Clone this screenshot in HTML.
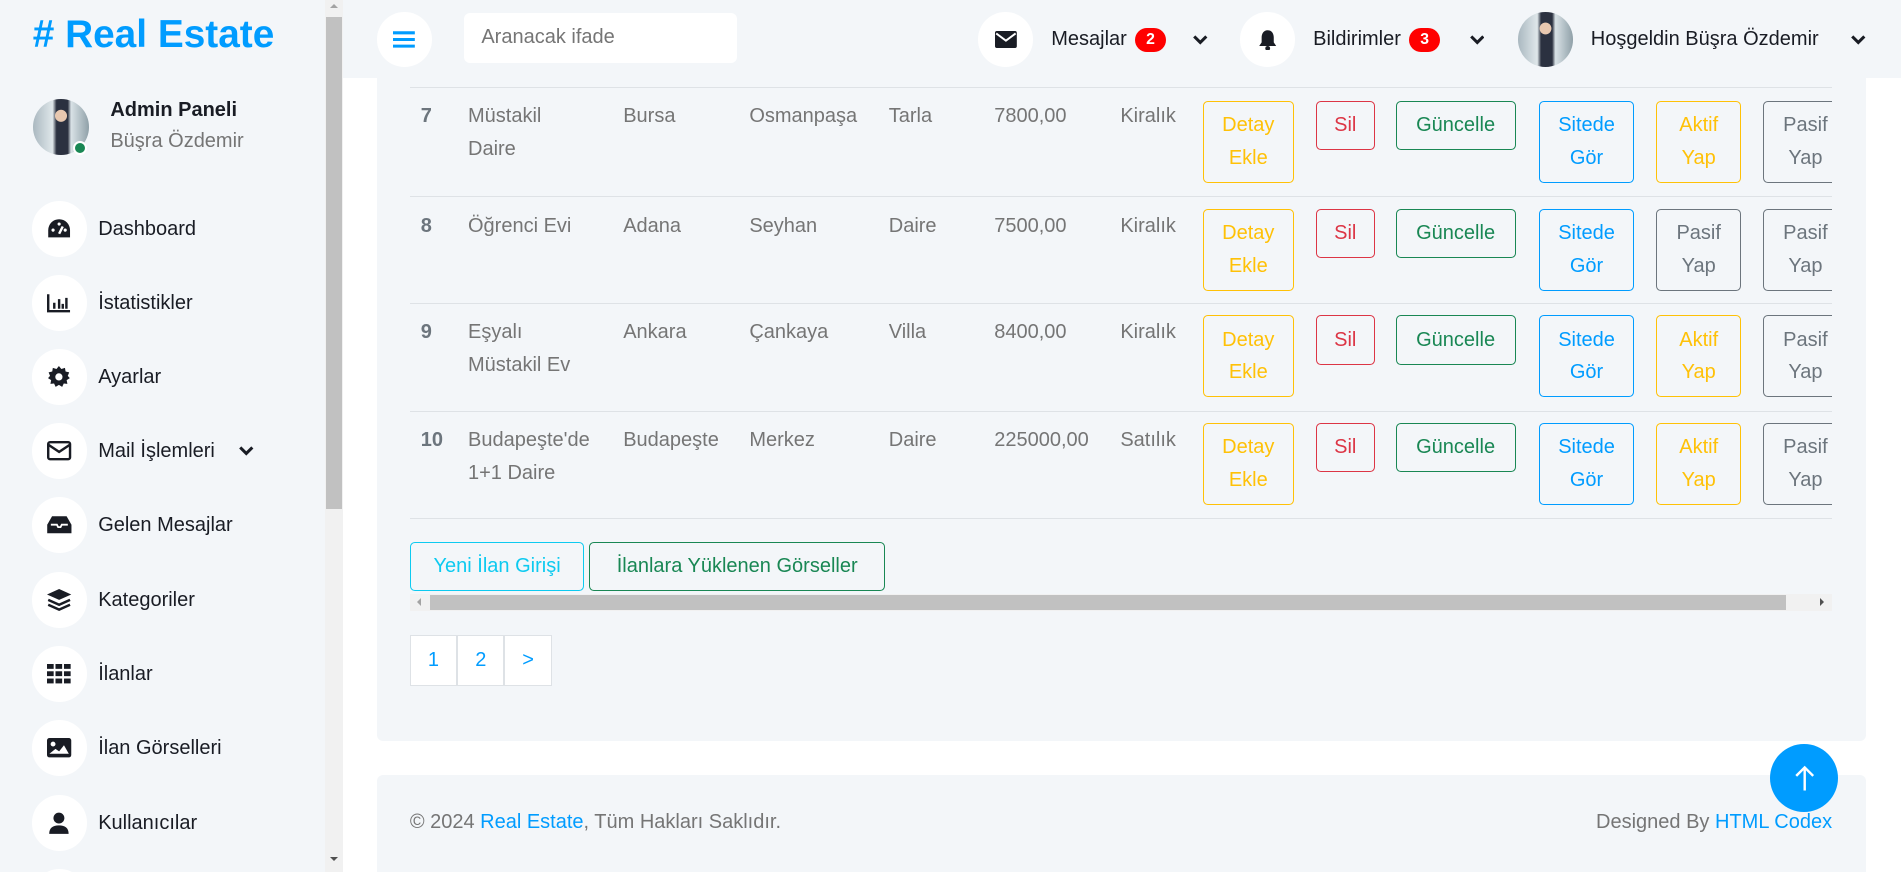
<!DOCTYPE html>
<html><head><meta charset="utf-8">
<style>
html{zoom:1.2125;background:#fff;overflow:hidden;height:719px}
*{box-sizing:border-box;margin:0;padding:0}
body{width:1568px;height:719px;overflow:hidden;background:#fff;font-family:"Liberation Sans",sans-serif;font-size:16px;color:#757575;position:relative}
.a{position:absolute}
.side{left:0;top:0;width:268px;height:719px;background:#f3f6f9}
.sb{left:268px;top:0;width:15px;height:719px;background:#f1f1f1}
.thumb{left:269px;top:14px;width:13px;height:406px;background:#c1c1c1}
.ic{width:46px;height:46px;border-radius:50%;background:#fff;display:flex;align-items:center;justify-content:center}
.nav{left:26px;display:flex;align-items:center;color:#191c24;font-size:16.5px}
.nav .ic{margin-right:9px}
.top{left:283px;top:0;width:1285px;height:64px;background:#f3f6f9}
.card{background:#f3f6f9;border-radius:5px}
.btn{position:absolute;border:1px solid;border-radius:4px;text-align:center;line-height:27px;padding:6px 0;font-size:16.5px;background:transparent}
.w{color:#ffc107;border-color:#ffc107}.d{color:#dc3545;border-color:#dc3545}.s{color:#198754;border-color:#198754}.p{color:#009cff;border-color:#009cff}.g{color:#6c757d;border-color:#6c757d}
.row{position:absolute;left:338px;width:1173px;border-top:1px solid #dee2e6}
.c{position:absolute;top:10px;line-height:27px;font-size:16.5px}
.badge{display:inline-block;width:26px;height:20px;border-radius:10px;background:#f00;color:#fff;font-size:13px;font-weight:bold;text-align:center;line-height:20px}
.pg{position:absolute;top:524px;width:39px;height:42px;border:1px solid #dee2e6;background:#fff;color:#009cff;text-align:center;line-height:40px;font-size:16.5px}
.av{border-radius:50%;background:radial-gradient(circle at 50% 30%,#e8c8b0 0 12%,transparent 13%),linear-gradient(90deg,#aab8c0,#dfe7ea 35%,#2b3140 42%,#2b3140 62%,#d9e2e6 68%,#8fa0a8)}
</style></head><body>
<div class="a side"></div>
<div class="a sb"></div><div class="a thumb"></div>
<div class="a" style="left:272px;top:3px;width:0;height:0;border:4px solid transparent;border-bottom-color:#a3a3a3;border-top:0"></div>
<div class="a" style="left:272px;top:707px;width:0;height:0;border:4px solid transparent;border-top-color:#505050;border-bottom:0"></div>
<div class="a" style="left:27px;top:11px;font-size:32px;font-weight:bold;color:#009cff">#&nbsp;Real Estate</div>
<div class="a av" style="left:27px;top:82px;width:46px;height:46px"></div>
<div class="a" style="left:60px;top:116px;width:12px;height:12px;border-radius:50%;background:#198754;border:2px solid #fff"></div>
<div class="a" style="left:91px;top:82px;font-weight:bold;color:#191c24;font-size:16.5px">Admin Paneli</div>
<div class="a" style="left:91px;top:107px;font-size:16.5px">Büşra Özdemir</div>

<div class="a nav" style="top:166px"><div class="ic"><svg width="20" height="18" viewBox="0 0 20 18"><path d="M10 1A9 9 0 0 0 1 10v6h18v-6A9 9 0 0 0 10 1z" fill="#191c24"/><circle cx="5" cy="10" r="1.3" fill="#fff"/><circle cx="15" cy="10" r="1.3" fill="#fff"/><circle cx="10" cy="5" r="1.3" fill="#fff"/><path d="M10 13L13 7" stroke="#fff" stroke-width="2"/></svg></div>Dashboard</div>
<div class="a nav" style="top:227px"><div class="ic"><svg width="20" height="16"><path d="M1 1v14h18" stroke="#191c24" stroke-width="2" fill="none"/><path d="M6 8v5M10 5v8M13 9v4M16 4v9" stroke="#191c24" stroke-width="2"/></svg></div>İstatistikler</div>
<div class="a nav" style="top:288px"><div class="ic"><svg width="18" height="18" viewBox="0 0 18 18"><path d="M9 0l2 2.5 3-1 .5 3 3 .8-1.2 2.8L18 10l-2.6 1.7.6 3-3-.3-1.3 2.8L9 15.6 6.3 17.2 5 14.4l-3 .3.6-3L0 10l1.7-1.9L.5 5.3l3-.8.5-3 3 1z" fill="#191c24"/><circle cx="9" cy="9" r="3" fill="#fff"/></svg></div>Ayarlar</div>
<div class="a nav" style="top:349px"><div class="ic"><svg width="20" height="16"><rect x="1" y="1" width="18" height="14" rx="1.5" fill="none" stroke="#191c24" stroke-width="2"/><path d="M1 3l9 6 9-6" fill="none" stroke="#191c24" stroke-width="2"/></svg></div>Mail İşlemleri<svg style="margin-left:20px" width="12" height="10"><path d="M1 2l5 5 5-5" fill="none" stroke="#191c24" stroke-width="2.5"/></svg></div>
<div class="a nav" style="top:410px"><div class="ic"><svg width="22" height="16"><path d="M5 1h12l4 7v7H1V8z" fill="#191c24"/><path d="M4 8h5l1 2h2l1-2h5" fill="none" stroke="#fff" stroke-width="1.5"/></svg></div>Gelen Mesajlar</div>
<div class="a nav" style="top:472px"><div class="ic"><svg width="20" height="18"><path d="M10 0l10 4.5-10 4.5L0 4.5z" fill="#191c24"/><path d="M1 9l9 4 9-4M1 13l9 4 9-4" fill="none" stroke="#191c24" stroke-width="2"/></svg></div>Kategoriler</div>
<div class="a nav" style="top:533px"><div class="ic"><svg width="20" height="16"><g fill="#191c24"><rect x="0" y="0" width="5.5" height="4"/><rect x="7" y="0" width="5.5" height="4"/><rect x="14" y="0" width="5.5" height="4"/><rect x="0" y="6" width="5.5" height="4"/><rect x="7" y="6" width="5.5" height="4"/><rect x="14" y="6" width="5.5" height="4"/><rect x="0" y="12" width="5.5" height="4"/><rect x="7" y="12" width="5.5" height="4"/><rect x="14" y="12" width="5.5" height="4"/></g></svg></div>İlanlar</div>
<div class="a nav" style="top:594px"><div class="ic"><svg width="20" height="16"><rect x="0" y="0" width="20" height="16" rx="2" fill="#191c24"/><circle cx="5" cy="5" r="2" fill="#fff"/><path d="M2 13l5-4 3 2 4-5 4 7z" fill="#fff"/></svg></div>İlan Görselleri</div>
<div class="a nav" style="top:656px"><div class="ic"><svg width="18" height="18"><circle cx="9" cy="5" r="4.5" fill="#191c24"/><path d="M1 18c0-5 3-7 8-7s8 2 8 7z" fill="#191c24"/></svg></div>Kullanıcılar</div>
<div class="a ic" style="left:26px;top:717px"></div>

<div class="a top"></div>
<div class="a ic" style="left:311px;top:10px;width:45px;height:45px"><svg width="18" height="14"><path d="M0 1.5h18M0 7h18M0 12.5h18" stroke="#009cff" stroke-width="2.5"/></svg></div>
<div class="a" style="left:383px;top:11px;width:225px;height:41px;background:#fff;border-radius:5px;padding:0 14px;line-height:41px;font-size:16.5px">Aranacak ifade</div>
<div class="a ic" style="left:807px;top:10px;width:45px;height:45px"><svg width="18" height="14"><rect width="18" height="14" rx="1.5" fill="#191c24"/><path d="M1 2l8 6 8-6" fill="none" stroke="#fff" stroke-width="1.6"/></svg></div>
<div class="a" style="left:867px;top:23px;color:#191c24;font-size:16.5px">Mesajlar <span class="badge" style="margin-left:2px;vertical-align:1px">2</span></div>
<svg class="a" style="left:984px;top:28px" width="12" height="10"><path d="M1 2l5 5 5-5" fill="none" stroke="#191c24" stroke-width="2.5"/></svg>
<div class="a ic" style="left:1023px;top:10px;width:45px;height:45px"><svg width="16" height="18"><path d="M8 1c-3.5 0-5 3-5 6v4l-2 3h14l-2-3V7c0-3-1.5-6-5-6z" fill="#191c24"/><circle cx="8" cy="16" r="2" fill="#191c24"/></svg></div>
<div class="a" style="left:1083px;top:23px;color:#191c24;font-size:16.5px">Bildirimler <span class="badge" style="margin-left:2px;vertical-align:1px">3</span></div>
<svg class="a" style="left:1212px;top:28px" width="12" height="10"><path d="M1 2l5 5 5-5" fill="none" stroke="#191c24" stroke-width="2.5"/></svg>
<div class="a av" style="left:1252px;top:10px;width:45px;height:45px"></div>
<div class="a" style="left:1312px;top:23px;color:#191c24;font-size:16.5px">Hoşgeldin Büşra Özdemir</div>
<svg class="a" style="left:1527px;top:28px" width="12" height="10"><path d="M1 2l5 5 5-5" fill="none" stroke="#191c24" stroke-width="2.5"/></svg>

<div class="a card" style="left:311px;top:64px;width:1228px;height:547px;border-radius:0 0 5px 5px"></div>

<div class="row" style="top:72px;height:90px">
<div class="c" style="left:9px;font-weight:bold;color:#6c757d">7</div><div class="c" style="left:48px">Müstakil<br>Daire</div><div class="c" style="left:176px">Bursa</div><div class="c" style="left:280px">Osmanpaşa</div><div class="c" style="left:395px">Tarla</div><div class="c" style="left:482px">7800,00</div><div class="c" style="left:586px">Kiralık</div>
</div>
<div class="row" style="top:162px;height:88px">
<div class="c" style="left:9px;font-weight:bold;color:#6c757d">8</div><div class="c" style="left:48px">Öğrenci Evi</div><div class="c" style="left:176px">Adana</div><div class="c" style="left:280px">Seyhan</div><div class="c" style="left:395px">Daire</div><div class="c" style="left:482px">7500,00</div><div class="c" style="left:586px">Kiralık</div>
</div>
<div class="row" style="top:250px;height:89px">
<div class="c" style="left:9px;font-weight:bold;color:#6c757d">9</div><div class="c" style="left:48px">Eşyalı<br>Müstakil Ev</div><div class="c" style="left:176px">Ankara</div><div class="c" style="left:280px">Çankaya</div><div class="c" style="left:395px">Villa</div><div class="c" style="left:482px">8400,00</div><div class="c" style="left:586px">Kiralık</div>
</div>
<div class="row" style="top:339px;height:89px;border-bottom:1px solid #dee2e6">
<div class="c" style="left:9px;font-weight:bold;color:#6c757d">10</div><div class="c" style="left:48px">Budapeşte'de<br>1+1 Daire</div><div class="c" style="left:176px">Budapeşte</div><div class="c" style="left:280px">Merkez</div><div class="c" style="left:395px">Daire</div><div class="c" style="left:482px">225000,00</div><div class="c" style="left:586px">Satılık</div>
</div>

<div class="a" style="left:338px;top:64px;width:1173px;height:400px;overflow:hidden">
<div style="position:relative;left:-338px;top:-64px">
<div class="btn w" style="left:992px;top:83px;width:75px">Detay<br>Ekle</div>
<div class="btn d" style="left:1085px;top:83px;width:49px">Sil</div>
<div class="btn s" style="left:1151px;top:83px;width:99px">Güncelle</div>
<div class="btn p" style="left:1269px;top:83px;width:79px">Sitede<br>Gör</div>
<div class="btn w" style="left:1366px;top:83px;width:70px">Aktif<br>Yap</div>
<div class="btn g" style="left:1454px;top:83px;width:70px">Pasif<br>Yap</div>
<div class="btn w" style="left:992px;top:172px;width:75px">Detay<br>Ekle</div>
<div class="btn d" style="left:1085px;top:172px;width:49px">Sil</div>
<div class="btn s" style="left:1151px;top:172px;width:99px">Güncelle</div>
<div class="btn p" style="left:1269px;top:172px;width:79px">Sitede<br>Gör</div>
<div class="btn g" style="left:1366px;top:172px;width:70px">Pasif<br>Yap</div>
<div class="btn g" style="left:1454px;top:172px;width:70px">Pasif<br>Yap</div>
<div class="btn w" style="left:992px;top:260px;width:75px">Detay<br>Ekle</div>
<div class="btn d" style="left:1085px;top:260px;width:49px">Sil</div>
<div class="btn s" style="left:1151px;top:260px;width:99px">Güncelle</div>
<div class="btn p" style="left:1269px;top:260px;width:79px">Sitede<br>Gör</div>
<div class="btn w" style="left:1366px;top:260px;width:70px">Aktif<br>Yap</div>
<div class="btn g" style="left:1454px;top:260px;width:70px">Pasif<br>Yap</div>
<div class="btn w" style="left:992px;top:349px;width:75px">Detay<br>Ekle</div>
<div class="btn d" style="left:1085px;top:349px;width:49px">Sil</div>
<div class="btn s" style="left:1151px;top:349px;width:99px">Güncelle</div>
<div class="btn p" style="left:1269px;top:349px;width:79px">Sitede<br>Gör</div>
<div class="btn w" style="left:1366px;top:349px;width:70px">Aktif<br>Yap</div>
<div class="btn g" style="left:1454px;top:349px;width:70px">Pasif<br>Yap</div>
</div></div>

<div class="btn" style="left:338px;top:447px;width:144px;color:#0dcaf0;border-color:#0dcaf0">Yeni İlan Girişi</div>
<div class="btn s" style="left:486px;top:447px;width:244px">İlanlara Yüklenen Görseller</div>
<div class="a" style="left:338px;top:490px;width:1173px;height:14px;background:#f1f1f1"></div>
<div class="a" style="left:355px;top:491px;width:1118px;height:12px;background:#c1c1c1"></div>
<div class="a" style="left:344px;top:493px;border:4px solid transparent;border-right-color:#a3a3a3;border-left:0"></div>
<div class="a" style="left:1501px;top:493px;border:4px solid transparent;border-left-color:#505050;border-right:0"></div>

<div class="pg" style="left:338px">1</div><div class="pg" style="left:377px">2</div><div class="pg" style="left:416px">&gt;</div>

<div class="a card" style="left:311px;top:639px;width:1228px;height:200px"></div>
<div class="a" style="left:338px;top:669px;font-size:16.5px">© 2024 <span style="color:#009cff">Real Estate</span>, Tüm Hakları Saklıdır.</div>
<div class="a" style="right:57px;top:669px;font-size:16.5px">Designed By <span style="color:#009cff">HTML Codex</span></div>
<div class="a" style="left:1460px;top:614px;width:56px;height:56px;border-radius:50%;background:#009cff;display:flex;align-items:center;justify-content:center"><svg width="16" height="22"><path d="M8 21V2M1 9l7-7 7 7" fill="none" stroke="#fff" stroke-width="2"/></svg></div>
</body></html>
